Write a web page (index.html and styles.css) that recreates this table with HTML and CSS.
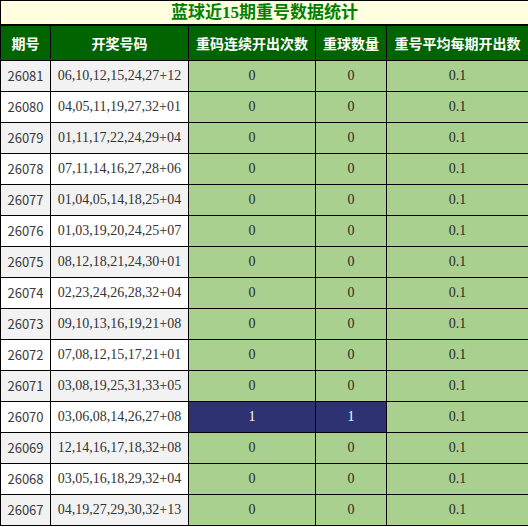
FILE: index.html
```html
<!DOCTYPE html>
<html lang="zh-CN">
<head>
    <meta charset="UTF-8">
    <meta name="viewport" content="width=device-width, initial-scale=1.0">
    <title>蓝球近15期重号数据统计</title>
    <link rel="stylesheet" href="styles.css">
</head>
<body>
    <table class="stats">
        <colgroup>
            <col class="c-issue">
            <col class="c-nums">
            <col class="c-streak">
            <col class="c-count">
            <col class="c-avg">
        </colgroup>
        <tr class="title-row">
            <td colspan="5">蓝球近15期重号数据统计</td>
        </tr>
        <tr class="head-row">
            <th>期号</th>
            <th>开奖号码</th>
            <th>重码连续开出次数</th>
            <th>重球数量</th>
            <th>重号平均每期开出数</th>
        </tr>
        <tr class="odd"><td class="issue">26081</td><td class="nums">06,10,12,15,24,27+12</td><td class="val">0</td><td class="val">0</td><td class="val">0.1</td></tr>
        <tr><td class="issue">26080</td><td class="nums">04,05,11,19,27,32+01</td><td class="val">0</td><td class="val">0</td><td class="val">0.1</td></tr>
        <tr class="odd"><td class="issue">26079</td><td class="nums">01,11,17,22,24,29+04</td><td class="val">0</td><td class="val">0</td><td class="val">0.1</td></tr>
        <tr><td class="issue">26078</td><td class="nums">07,11,14,16,27,28+06</td><td class="val">0</td><td class="val">0</td><td class="val">0.1</td></tr>
        <tr class="odd"><td class="issue">26077</td><td class="nums">01,04,05,14,18,25+04</td><td class="val">0</td><td class="val">0</td><td class="val">0.1</td></tr>
        <tr><td class="issue">26076</td><td class="nums">01,03,19,20,24,25+07</td><td class="val">0</td><td class="val">0</td><td class="val">0.1</td></tr>
        <tr class="odd"><td class="issue">26075</td><td class="nums">08,12,18,21,24,30+01</td><td class="val">0</td><td class="val">0</td><td class="val">0.1</td></tr>
        <tr><td class="issue">26074</td><td class="nums">02,23,24,26,28,32+04</td><td class="val">0</td><td class="val">0</td><td class="val">0.1</td></tr>
        <tr class="odd"><td class="issue">26073</td><td class="nums">09,10,13,16,19,21+08</td><td class="val">0</td><td class="val">0</td><td class="val">0.1</td></tr>
        <tr><td class="issue">26072</td><td class="nums">07,08,12,15,17,21+01</td><td class="val">0</td><td class="val">0</td><td class="val">0.1</td></tr>
        <tr class="odd"><td class="issue">26071</td><td class="nums">03,08,19,25,31,33+05</td><td class="val">0</td><td class="val">0</td><td class="val">0.1</td></tr>
        <tr><td class="issue">26070</td><td class="nums">03,06,08,14,26,27+08</td><td class="val hit">1</td><td class="val hit">1</td><td class="val">0.1</td></tr>
        <tr class="odd"><td class="issue">26069</td><td class="nums">12,14,16,17,18,32+08</td><td class="val">0</td><td class="val">0</td><td class="val">0.1</td></tr>
        <tr><td class="issue">26068</td><td class="nums">03,05,16,18,29,32+04</td><td class="val">0</td><td class="val">0</td><td class="val">0.1</td></tr>
        <tr class="odd"><td class="issue">26067</td><td class="nums">04,19,27,29,30,32+13</td><td class="val">0</td><td class="val">0</td><td class="val">0.1</td></tr>
    </table>
</body>
</html>
```

FILE: styles.css
```css
body {
    margin: 0;
    background-color: #fff;
}
.stats {
    width: 528px;
    table-layout: fixed;
    border-collapse: collapse;
    font-family: "Liberation Serif", "Noto Sans CJK SC", serif;
    font-size: 14px;
    color: #333;
}
.c-issue { width: 50px; }
.c-nums { width: 138px; }
.c-streak { width: 127px; }
.c-count { width: 71px; }
.c-avg { width: 142px; }
.stats td, .stats th {
    border: 1px solid #000;
    padding: 0;
    line-height: 16px;
    text-align: center;
    white-space: nowrap;
}
.title-row td {
    height: 23px;
    background-color: #ffffe0;
    color: #008000;
    font-size: 17px;
    font-weight: bold;
    border-bottom-width: 2px;
}
.head-row th {
    height: 34px;
    background-color: #006400;
    color: #fff;
    font-family: "Noto Sans CJK SC", sans-serif;
    font-size: 14px;
    font-weight: bold;
}
.stats td.issue, .stats td.nums, .stats td.val {
    height: 30px;
}
.issue {
    font-family: "Noto Sans CJK SC", sans-serif;
    font-size: 13px;
    color: #3a3a3a;
    background-color: #fff;
}
.nums {
    background-color: #fff;
}
.odd .issue, .odd .nums {
    background-color: #f2f2f2;
}
.val {
    background-color: #a9d08e;
    color: #2b2b2b;
}
.val.hit {
    background-color: #2e3273;
    color: #fff;
}
```
